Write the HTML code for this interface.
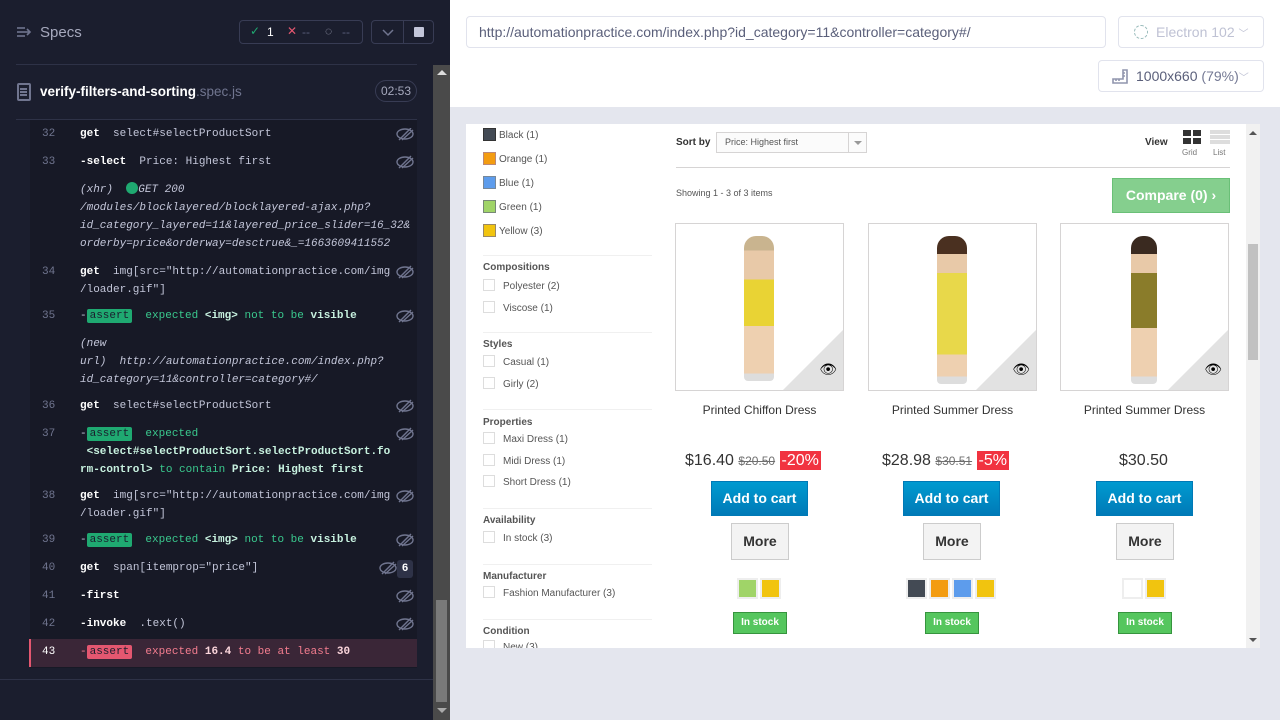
<!DOCTYPE html>
<html><head><meta charset="utf-8"><style>
*{box-sizing:border-box;margin:0;padding:0}
body{width:1280px;height:720px;overflow:hidden;font-family:"Liberation Sans",sans-serif;position:relative;background:#fff}
.a{position:absolute}
#left{left:0;top:0;width:450px;height:720px;background:#1b1e2e}
.mono{font-family:"Liberation Mono",monospace;font-size:11px}
.row{position:absolute;left:30px;width:387px;color:#c3c6d9}
.num{position:absolute;left:12px;color:#70758f}
.cmd{position:absolute;left:50px;line-height:18px;white-space:pre}
.k{color:#fff;font-weight:bold}
.g{color:#3ac98e}
.badge{padding:1px 3px;border-radius:2px;color:#1b1e2e}
#right{left:450px;top:0;width:830px;height:720px;background:#e4e6ee}
.pc{font-size:10px;color:#555}
.sw{display:inline-block;width:13px;height:13px;vertical-align:-3px;margin-right:3px}
.cb{display:inline-block;width:12px;height:12px;border:1px solid #ddd;vertical-align:-2px;margin-right:8px}
.fh{font-size:10px;font-weight:bold;color:#555}
.prod{position:absolute;top:99px;width:169px;text-align:center}
.img{height:168px;border:1px solid #d6d4d4;position:relative;background:#fff;overflow:hidden}
.tri{position:absolute;right:0;bottom:0;width:0;height:0;border-left:60px solid transparent;border-bottom:60px solid #e2e2e2}
</style></head><body>
<div id="left" class="a">
 <div class="a" style="left:16px;top:25px;width:16px;height:14px">
  <svg width="16" height="14"><g stroke="#70758f" stroke-width="1.6"><line x1="1" y1="3" x2="9" y2="3"/><line x1="1" y1="7" x2="14" y2="7"/><line x1="1" y1="11" x2="9" y2="11"/><polyline points="11,4 14,7 11,10" fill="none"/></g></svg>
 </div>
 <div class="a" style="left:40px;top:24px;font-size:15px;color:#a6a9bd">Specs</div>
 <div class="a" style="left:239px;top:20px;width:124px;height:24px;border:1px solid #383c54;border-radius:4px;font-size:12px">
  <span class="a" style="left:10px;top:3px;color:#1fa971">✓</span><span class="a" style="left:27px;top:4px;color:#fff">1</span>
  <span class="a" style="left:47px;top:3px;color:#e45770">✕</span><span class="a" style="left:62px;top:4px;color:#5a5f7a">--</span>
  <span class="a" style="left:85px;top:3px;color:#a6a9bd">◌</span><span class="a" style="left:102px;top:4px;color:#5a5f7a">--</span>
 </div>
 <div class="a" style="left:371px;top:20px;width:63px;height:24px;border:1px solid #383c54;border-radius:4px">
  <div class="a" style="left:31px;top:0;width:1px;height:22px;background:#383c54"></div>
  <svg class="a" style="left:9px;top:7px" width="14" height="10"><polyline points="2,2 7,7 12,2" fill="none" stroke="#70758f" stroke-width="1.5"/></svg>
  <div class="a" style="left:42px;top:6px;width:10px;height:10px;background:#c3c6d9;border-radius:1px"></div>
 </div>
 <div class="a" style="left:16px;top:64px;width:401px;height:1px;background:#2e3247"></div>
 <div class="a" style="left:17px;top:83px;width:14px;height:18px;border:2px solid #70758f;border-radius:2px"></div>
 <div class="a" style="left:20px;top:88px;width:7px;height:1.5px;background:#70758f;box-shadow:0 3px #70758f,0 6px #70758f"></div>
 <div class="a" style="left:40px;top:84px;font-size:13.5px;color:#fff;font-weight:bold">verify-filters-and-sorting<span style="color:#70758f;font-weight:normal">.spec.js</span></div>
 <div class="a" style="left:375px;top:80px;width:42px;height:22px;border:1px solid #383c54;border-radius:11px;font-size:12px;color:#a6a9bd;text-align:center;line-height:20px">02:53</div>
 <div class="a" style="left:16px;top:119px;width:401px;height:1px;background:#2e3247"></div>
 <div class="a" style="left:30px;top:120px;width:387px;height:548px;background:#171926"></div>
 <div class="a" style="left:0;top:679px;width:433px;height:1px;background:#2e3247"></div>
 <div class="a" style="left:433px;top:65px;width:17px;height:655px;background:#4a4a4a"></div>
 <div class="a" style="left:436px;top:600px;width:11px;height:102px;background:#7a7a7a"></div>
 <div class="a" style="left:437px;top:70px;width:0;height:0;border:5px solid transparent;border-bottom:5px solid #ddd;border-top:0"></div>
 <div class="a" style="left:437px;top:708px;width:0;height:0;border:5px solid transparent;border-top:5px solid #aaa;border-bottom:0"></div>
 <div class="mono">
  <div class="row" style="top:125px"><span class="num" style="line-height:18px">32</span><span class="cmd"><span class="k">get</span>  select#selectProductSort</span></div>
  <div class="row" style="top:153px"><span class="num" style="line-height:18px">33</span><span class="cmd"><span class="k">-select</span>  Price: Highest first</span></div>
  <div class="row" style="top:181px"><span class="cmd"><i>(xhr)</i>  <span style="display:inline-block;width:12px;height:12px;border-radius:6px;background:#1fa971;vertical-align:-2px"></span><i>GET 200</i>
<i>/modules/blocklayered/blocklayered-ajax.php?</i>
<i>id_category_layered=11&amp;layered_price_slider=16_32&amp;</i>
<i>orderby=price&amp;orderway=desctrue&amp;_=1663609411552</i></span></div>
  <div class="row" style="top:263px"><span class="num" style="line-height:18px">34</span><span class="cmd"><span class="k">get</span>  img[src="http://automationpractice.com/img
/loader.gif"]</span></div>
  <div class="row" style="top:307px"><span class="num" style="line-height:18px">35</span><span class="cmd">-<span class="badge" style="background:#1fa971">assert</span>  <span class="g">expected</span> <span class="k" style="color:#c7f1df">&lt;img&gt;</span> <span class="g">not to be</span> <span class="k" style="color:#c7f1df">visible</span></span></div>
  <div class="row" style="top:335px"><span class="cmd"><i>(new
url)</i>  <i>http://automationpractice.com/index.php?
id_category=11&amp;controller=category#/</i></span></div>
  <div class="row" style="top:397px"><span class="num" style="line-height:18px">36</span><span class="cmd"><span class="k">get</span>  select#selectProductSort</span></div>
  <div class="row" style="top:425px"><span class="num" style="line-height:18px">37</span><span class="cmd">-<span class="badge" style="background:#1fa971">assert</span>  <span class="g">expected</span>
 <span style="color:#c7f1df;font-weight:bold">&lt;select#selectProductSort.selectProductSort.fo
rm-control&gt;</span> <span class="g">to contain</span> <span style="color:#c7f1df;font-weight:bold">Price: Highest first</span></span></div>
  <div class="row" style="top:487px"><span class="num" style="line-height:18px">38</span><span class="cmd"><span class="k">get</span>  img[src="http://automationpractice.com/img
/loader.gif"]</span></div>
  <div class="row" style="top:531px"><span class="num" style="line-height:18px">39</span><span class="cmd">-<span class="badge" style="background:#1fa971">assert</span>  <span class="g">expected</span> <span class="k" style="color:#c7f1df">&lt;img&gt;</span> <span class="g">not to be</span> <span class="k" style="color:#c7f1df">visible</span></span></div>
  <div class="row" style="top:559px"><span class="num" style="line-height:18px">40</span><span class="cmd"><span class="k">get</span>  span[itemprop="price"]</span><span class="a" style="right:4px;top:1px;width:16px;height:18px;background:#2e3247;border-radius:3px;color:#fff;text-align:center;line-height:18px;font-weight:bold">6</span></div>
  <div class="row" style="top:587px"><span class="num" style="line-height:18px">41</span><span class="cmd"><span class="k">-first</span></span></div>
  <div class="row" style="top:615px"><span class="num" style="line-height:18px">42</span><span class="cmd"><span class="k">-invoke</span>  .text()</span></div>
  <div class="a" style="left:29px;top:639px;width:388px;height:28px;background:#3a2637;border-left:2px solid #e45770"></div>
  <div class="row" style="top:643px"><span class="num" style="line-height:18px;color:#fff">43</span><span class="cmd" style="color:#f47d8f">-<span class="badge" style="background:#e45770;color:#1b1e2e">assert</span>  expected <b style="color:#fbd5db">16.4</b> to be at least <b style="color:#fbd5db">30</b></span></div>
 </div>
 <svg class="a" style="left:376px;top:128px" width="40" height="530" fill="none" stroke="#70758f" stroke-width="1.4">
  <defs><g id="e"><ellipse cx="29" cy="6" rx="8" ry="5"/><line x1="23" y1="12" x2="35" y2="0"/><line x1="26" y1="12" x2="37" y2="2"/></g></defs>
  <use href="#e" y="0"/><use href="#e" y="28"/><use href="#e" y="138"/><use href="#e" y="182"/><use href="#e" y="272"/><use href="#e" y="300"/><use href="#e" y="362"/><use href="#e" y="406"/><use href="#e" x="-17" y="434"/><use href="#e" y="462"/><use href="#e" y="490"/>
 </svg>
</div>
<div id="right" class="a">
 <div class="a" style="left:0;top:0;width:830px;height:107px;background:#fff"></div>
 <div class="a" style="left:16px;top:16px;width:640px;height:32px;border:1px solid #e1e3ed;border-radius:4px;font-size:14px;color:#5a5f7a;line-height:30px;padding-left:12px">http://automationpractice.com/index.php?id_category=11&amp;controller=category#/</div>
 <div class="a" style="left:668px;top:16px;width:146px;height:32px;border:1px solid #e1e3ed;border-radius:4px;font-size:14px;color:#bfc2d4;line-height:30px;padding-left:37px">Electron 102 <span style="font-size:10px">﹀</span></div>
 <div class="a" style="left:684px;top:25px;width:14px;height:14px;border:1px dashed #9bb;border-radius:7px"></div>
 <div class="a" style="left:648px;top:60px;width:166px;height:32px;border:1px solid #e1e3ed;border-radius:4px;font-size:14px;color:#5a5f7a;line-height:30px;padding-left:37px">1000x660 <span style="color:#747994"> (79%)</span><span style="font-size:10px;color:#bfc2d4">﹀</span></div>
 <svg class="a" style="left:661px;top:68px" width="18" height="16" fill="none" stroke="#9095ad" stroke-width="1.6"><path d="M2 15H16V2H12V11H2Z"/><path d="M5 11v2M8 11v2M14 5h-2M14 8h-2"/></svg>
 <div class="a" style="left:16px;top:124px;width:794px;height:524px;background:#fff;overflow:hidden">
  <div class="a" style="left:780px;top:0;width:14px;height:524px;background:#f1f1f1"></div>
  <div class="a" style="left:782px;top:120px;width:10px;height:116px;background:#c1c1c1"></div>
  <div class="a" style="left:783px;top:7px;border:4px solid transparent;border-bottom:4px solid #555;border-top:0"></div>
  <div class="a" style="left:783px;top:514px;border:4px solid transparent;border-top:4px solid #555;border-bottom:0"></div>
  <div class="a pc" style="left:17px;top:0px;line-height:24px">
   <div><span class="sw" style="background:#434a54;border:1px solid #333"></span>Black (1)</div>
   <div><span class="sw" style="background:#f39c11;border:1px solid #b87"></span>Orange (1)</div>
   <div><span class="sw" style="background:#5d9cec;border:1px solid #789"></span>Blue (1)</div>
   <div><span class="sw" style="background:#a0d468;border:1px solid #787"></span>Green (1)</div>
   <div><span class="sw" style="background:#f1c40f;border:1px solid #986"></span>Yellow (3)</div>
  </div>
  <div class="a" style="left:17px;top:131px;width:169px;height:1px;background:#f0f0f0"></div>
  <div class="a fh" style="left:17px;top:138px">Compositions</div>
  <div class="a pc" style="left:17px;top:152px;line-height:22px"><div><span class="cb"></span>Polyester (2)</div><div><span class="cb"></span>Viscose (1)</div></div>
  <div class="a" style="left:17px;top:208px;width:169px;height:1px;background:#f0f0f0"></div>
  <div class="a fh" style="left:17px;top:215px">Styles</div>
  <div class="a pc" style="left:17px;top:228px;line-height:22px"><div><span class="cb"></span>Casual (1)</div><div><span class="cb"></span>Girly (2)</div></div>
  <div class="a" style="left:17px;top:285px;width:169px;height:1px;background:#f0f0f0"></div>
  <div class="a fh" style="left:17px;top:293px">Properties</div>
  <div class="a pc" style="left:17px;top:305px;line-height:21.5px"><div><span class="cb"></span>Maxi Dress (1)</div><div><span class="cb"></span>Midi Dress (1)</div><div><span class="cb"></span>Short Dress (1)</div></div>
  <div class="a" style="left:17px;top:384px;width:169px;height:1px;background:#f0f0f0"></div>
  <div class="a fh" style="left:17px;top:391px">Availability</div>
  <div class="a pc" style="left:17px;top:404px;line-height:22px"><div><span class="cb"></span>In stock (3)</div></div>
  <div class="a" style="left:17px;top:440px;width:169px;height:1px;background:#f0f0f0"></div>
  <div class="a fh" style="left:17px;top:447px">Manufacturer</div>
  <div class="a pc" style="left:17px;top:459px;line-height:22px"><div><span class="cb"></span>Fashion Manufacturer (3)</div></div>
  <div class="a" style="left:17px;top:495px;width:169px;height:1px;background:#f0f0f0"></div>
  <div class="a fh" style="left:17px;top:502px">Condition</div>
  <div class="a pc" style="left:17px;top:516px"><span class="cb"></span>New (3)</div>
  <div class="a fh" style="left:210px;top:13px;color:#333">Sort by</div>
  <div class="a" style="left:250px;top:8px;width:151px;height:21px;border:1px solid #d6d4d4;font-size:9px;color:#555;line-height:19px;padding-left:8px;background:#fbfbfb">Price: Highest first
   <div class="a" style="right:0;top:0;width:18px;height:19px;border-left:1px solid #d6d4d4"><div class="a" style="left:5px;top:8px;border:4px solid transparent;border-top:4px solid #999;border-bottom:0"></div></div></div>
  <div class="a fh" style="left:679px;top:13px;color:#333">View</div>
  <div class="a" style="left:717px;top:6px;width:8px;height:6px;background:#333;box-shadow:10px 0 #333,0 8px #333,10px 8px #333"></div>
  <div class="a" style="left:744px;top:6px;width:20px;height:14px;background:repeating-linear-gradient(#ddd 0 4px,#fff 4px 5px)"></div>
  <div class="a" style="left:716px;top:24px;font-size:8px;color:#777">Grid</div>
  <div class="a" style="left:747px;top:24px;font-size:8px;color:#777">List</div>
  <div class="a" style="left:210px;top:43px;width:554px;height:1px;background:#d6d4d4"></div>
  <div class="a pc" style="left:210px;top:64px;font-size:9px">Showing 1 - 3 of 3 items</div>
  <div class="a" style="left:646px;top:54px;width:118px;height:35px;background:#85cf8e;border:1px solid #6ac077;color:#fff;font-weight:bold;font-size:14px;line-height:33px;text-align:center">Compare (0) ›</div>
  <div class="prod" style="left:209px"><div class="img"><div class="tri"></div>
   <div class="a" style="left:68px;top:12px;width:30px;height:145px;background:linear-gradient(#c9b48f 0 10%,#e8c9a8 10% 30%,#e9d334 30% 62%,#eed0b0 62% 95%,#ddd 95%);border-radius:12px 12px 4px 4px"></div>
   <div class="a" style="right:6px;bottom:12px;font-size:14px">👁</div></div>
   <div style="font-size:12px;color:#333;margin-top:12px">Printed Chiffon Dress</div></div>
  <div class="prod" style="left:402px"><div class="img"><div class="tri"></div>
   <div class="a" style="left:68px;top:12px;width:30px;height:148px;background:linear-gradient(#4a3020 0 12%,#e8c9a8 12% 25%,#e8d84a 25% 80%,#eed0b0 80% 95%,#ddd 95%);border-radius:12px 12px 4px 4px"></div>
   <div class="a" style="right:6px;bottom:12px;font-size:14px">👁</div></div>
   <div style="font-size:12px;color:#333;margin-top:12px">Printed Summer Dress</div></div>
  <div class="prod" style="left:594px"><div class="img"><div class="tri"></div>
   <div class="a" style="left:70px;top:12px;width:26px;height:148px;background:linear-gradient(#3a2a20 0 12%,#e8c9a8 12% 25%,#8a7c2a 25% 62%,#eed0b0 62% 95%,#ddd 95%);border-radius:12px 12px 4px 4px"></div>
   <div class="a" style="right:6px;bottom:12px;font-size:14px">👁</div></div>
   <div style="font-size:12px;color:#333;margin-top:12px">Printed Summer Dress</div></div>
  <div class="a" style="left:219px;top:328px;font-size:16px;color:#333">$16.40 <s style="font-size:12px;color:#6f6f6f">$20.50</s> <span style="background:#f13340;color:#fff;padding:1px 2px">-20%</span></div>
  <div class="a" style="left:416px;top:328px;font-size:16px;color:#333">$28.98 <s style="font-size:12px;color:#6f6f6f">$30.51</s> <span style="background:#f13340;color:#fff;padding:1px 2px">-5%</span></div>
  <div class="a" style="left:653px;top:328px;font-size:16px;color:#333">$30.50</div>
  <div class="a" style="left:245px;top:357px;width:97px;height:35px;background:linear-gradient(#009ad0,#007ab7);border:1px solid #0079b6;color:#fff;font-weight:bold;font-size:14px;text-align:center;line-height:33px">Add to cart</div>
  <div class="a" style="left:437px;top:357px;width:97px;height:35px;background:linear-gradient(#009ad0,#007ab7);border:1px solid #0079b6;color:#fff;font-weight:bold;font-size:14px;text-align:center;line-height:33px">Add to cart</div>
  <div class="a" style="left:630px;top:357px;width:97px;height:35px;background:linear-gradient(#009ad0,#007ab7);border:1px solid #0079b6;color:#fff;font-weight:bold;font-size:14px;text-align:center;line-height:33px">Add to cart</div>
  <div class="a" style="left:265px;top:399px;width:58px;height:37px;background:#f3f3f3;border:1px solid #ccc;font-weight:bold;font-size:14px;text-align:center;line-height:35px;color:#333">More</div>
  <div class="a" style="left:457px;top:399px;width:58px;height:37px;background:#f3f3f3;border:1px solid #ccc;font-weight:bold;font-size:14px;text-align:center;line-height:35px;color:#333">More</div>
  <div class="a" style="left:650px;top:399px;width:58px;height:37px;background:#f3f3f3;border:1px solid #ccc;font-weight:bold;font-size:14px;text-align:center;line-height:35px;color:#333">More</div>
  <div class="a" style="left:271px;top:454px;width:21px;height:21px;border:2px solid #eee;background:#a0d468"></div>
  <div class="a" style="left:294px;top:454px;width:21px;height:21px;border:2px solid #eee;background:#f1c40f"></div>
  <div class="a" style="left:440px;top:454px;width:21px;height:21px;border:2px solid #eee;background:#434a54"></div>
  <div class="a" style="left:463px;top:454px;width:21px;height:21px;border:2px solid #eee;background:#f39c11"></div>
  <div class="a" style="left:486px;top:454px;width:21px;height:21px;border:2px solid #eee;background:#5d9cec"></div>
  <div class="a" style="left:509px;top:454px;width:21px;height:21px;border:2px solid #eee;background:#f1c40f"></div>
  <div class="a" style="left:656px;top:454px;width:21px;height:21px;border:2px solid #eee;background:#fff"></div>
  <div class="a" style="left:679px;top:454px;width:21px;height:21px;border:2px solid #eee;background:#f1c40f"></div>
  <div class="a" style="left:267px;top:488px;width:54px;height:22px;background:#55c65e;border:1px solid #36943e;color:#fff;font-size:10px;font-weight:bold;text-align:center;line-height:20px">In stock</div>
  <div class="a" style="left:459px;top:488px;width:54px;height:22px;background:#55c65e;border:1px solid #36943e;color:#fff;font-size:10px;font-weight:bold;text-align:center;line-height:20px">In stock</div>
  <div class="a" style="left:652px;top:488px;width:54px;height:22px;background:#55c65e;border:1px solid #36943e;color:#fff;font-size:10px;font-weight:bold;text-align:center;line-height:20px">In stock</div>
 </div>
</div>
</body></html>
